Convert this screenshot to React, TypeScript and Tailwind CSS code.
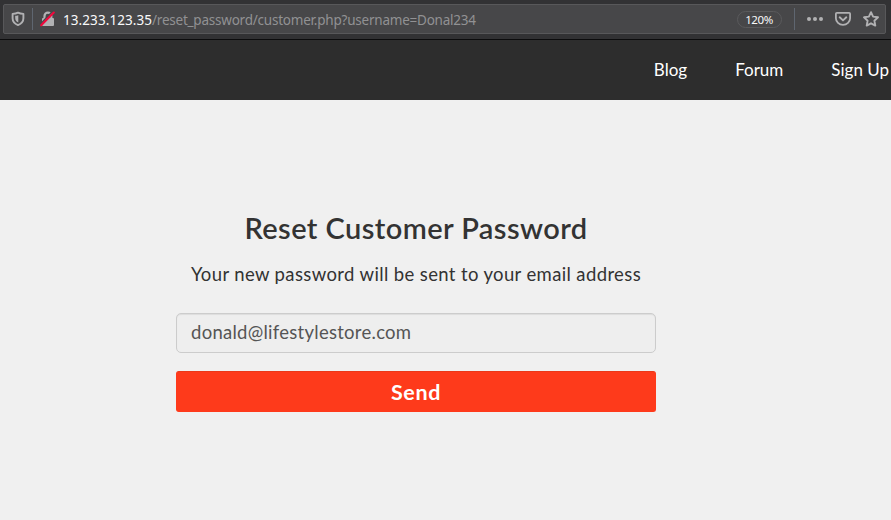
import React from "react";

function ShieldIcon() {
  return (
    <svg width="14" height="16" viewBox="0 0 14 16" fill="none" className="shrink-0">
      <path d="M7 1.700C5.300 2.500 3.500 2.800 1.600 2.900v4.300c0 3.200 2 5.500 5.400 6.900 3.400-1.400 5.400-3.700 5.400-6.900V2.900C10.500 2.800 8.700 2.500 7 1.700Z" stroke="#b1b1b3" strokeWidth="1.900" strokeLinejoin="round" />
      <path d="M7.300 4.200v7.400C5.200 10.500 4.200 9.200 4.200 7V4.800c1.100 0 2.100-.2 3.100-.6Z" fill="#b1b1b3" />
    </svg>
  );
}

function InsecureLockIcon() {
  return (
    <svg width="16" height="16" viewBox="0 0 16 16" fill="none" className="shrink-0">
      <path d="M4.500 8V5a3.400 3.400 0 0 1 6.800 0V8" stroke="#b1b1b3" strokeWidth="2.200" />
      <rect x="2" y="7" width="12" height="8" rx="1" fill="#b1b1b3" />
      <path d="M0 13.600 12.600 0.400" stroke="#474749" strokeWidth="1.600" />
      <path d="M1.200 14.300 13.800 1.600" stroke="#f3063c" strokeWidth="2.100" strokeLinecap="round" />
    </svg>
  );
}

function PocketIcon() {
  return (
    <svg width="16" height="16" viewBox="0 0 16 16" fill="none" className="shrink-0" stroke="#b1b1b3" strokeLinecap="round" strokeLinejoin="round">
      <path d="M1.900 1.800h12.200c.6 0 1 .4 1 1v4.400a7.100 6.600 0 0 1-14.200 0V2.800c0-.6.4-1 1-1Z" strokeWidth="1.800" />
      <path d="m4.700 6.300 3.300 3.100 3.300-3.100" strokeWidth="1.900" />
    </svg>
  );
}

function StarIcon() {
  return (
    <svg width="16" height="16" viewBox="0 0 16 16" fill="none" className="shrink-0">
      <path d="m8 1.200 2.100 4.400 4.900.7-3.600 3.400.9 4.900L8 12.300l-4.300 2.300.9-4.900L1 6.300l4.900-.7L8 1.200Z" stroke="#b1b1b3" strokeWidth="1.900" strokeLinejoin="round" />
    </svg>
  );
}

function AddressBar() {
  return (
    <div className="h-10 border-b border-[#0c0c0d] bg-[#323234] pt-1 pl-[3px]">
      <div className="flex h-[30px] w-[883px] items-center rounded-[2px] border border-[#58585a] bg-[#474749] pl-[7px] font-['Noto_Sans',sans-serif]">
        <ShieldIcon />
        <div className="ml-[7px] h-[22px] w-px bg-[#5f6670]" />
        <div className="ml-[7px] flex"><InsecureLockIcon /></div>
        <div className="ml-[7px] flex pt-px text-[13.5px] leading-5 whitespace-nowrap">
          <span className="w-[89px] tracking-[0.08px] text-[#f9f9fa]">13.233.123.35</span>
          <span className="tracking-[-0.22px] text-[#919193]">/reset_password/customer.php?username=Donal234</span>
        </div>
        <div className="ml-auto flex h-[17px] w-[45px] items-center justify-center rounded-full border border-[#5a5a5c] pt-px pr-px text-[11.5px] tracking-[-0.4px] text-[#f9f9fa]">120%</div>
        <div className="ml-3 h-[22px] w-px bg-[#5f6670]" />
        <div className="ml-3 flex gap-[2px]">
          <i className="size-1 rounded-full bg-[#b1b1b3]" />
          <i className="size-1 rounded-full bg-[#b1b1b3]" />
          <i className="size-1 rounded-full bg-[#b1b1b3]" />
        </div>
        <div className="mr-[6px] ml-3 flex gap-3"><PocketIcon /><StarIcon /></div>
      </div>
    </div>
  );
}

export default function App() {
  return (
    <div className="h-[520px] w-[891px] overflow-hidden bg-[#f0f0f0] font-['Lato',sans-serif]">
      <AddressBar />
      <nav className="flex h-[60px] items-center justify-end bg-[#2d2d2d] pr-[2px] text-[17px] leading-6 whitespace-nowrap text-white">
        <a className="mr-12">Blog</a>
        <a className="mr-12">Forum</a>
        <a>Sign Up</a>
      </nav>
      <main className="ml-44 flex w-[480px] flex-col pt-[108px]">
        <h1 className="text-center text-[29px] leading-10 font-semibold tracking-[0.42px] whitespace-nowrap text-[#333]">Reset Customer Password</h1>
        <p className="mt-3 text-center text-[18.5px] leading-7 tracking-[0.37px] whitespace-nowrap text-[#333]">Your new password will be sent to your email address</p>
        <input readOnly value="donald@lifestylestore.com" className="mt-[25px] h-10 w-full rounded-[5px] border border-[#ccc] bg-[#eee] px-[14px] pb-[3px] text-[18.5px] tracking-[0.27px] text-[#555] shadow-[inset_0_1px_1px_rgba(0,0,0,0.075)] outline-none" />
        <button className="mt-[18px] h-[41px] w-full rounded-[3px] border border-[#fe3a1b] border-t-[#ea3819] bg-[#fe3a1b] pt-[3px] text-[21.5px] leading-none font-bold tracking-[0.6px] text-white">Send</button>
      </main>
    </div>
  );
}
